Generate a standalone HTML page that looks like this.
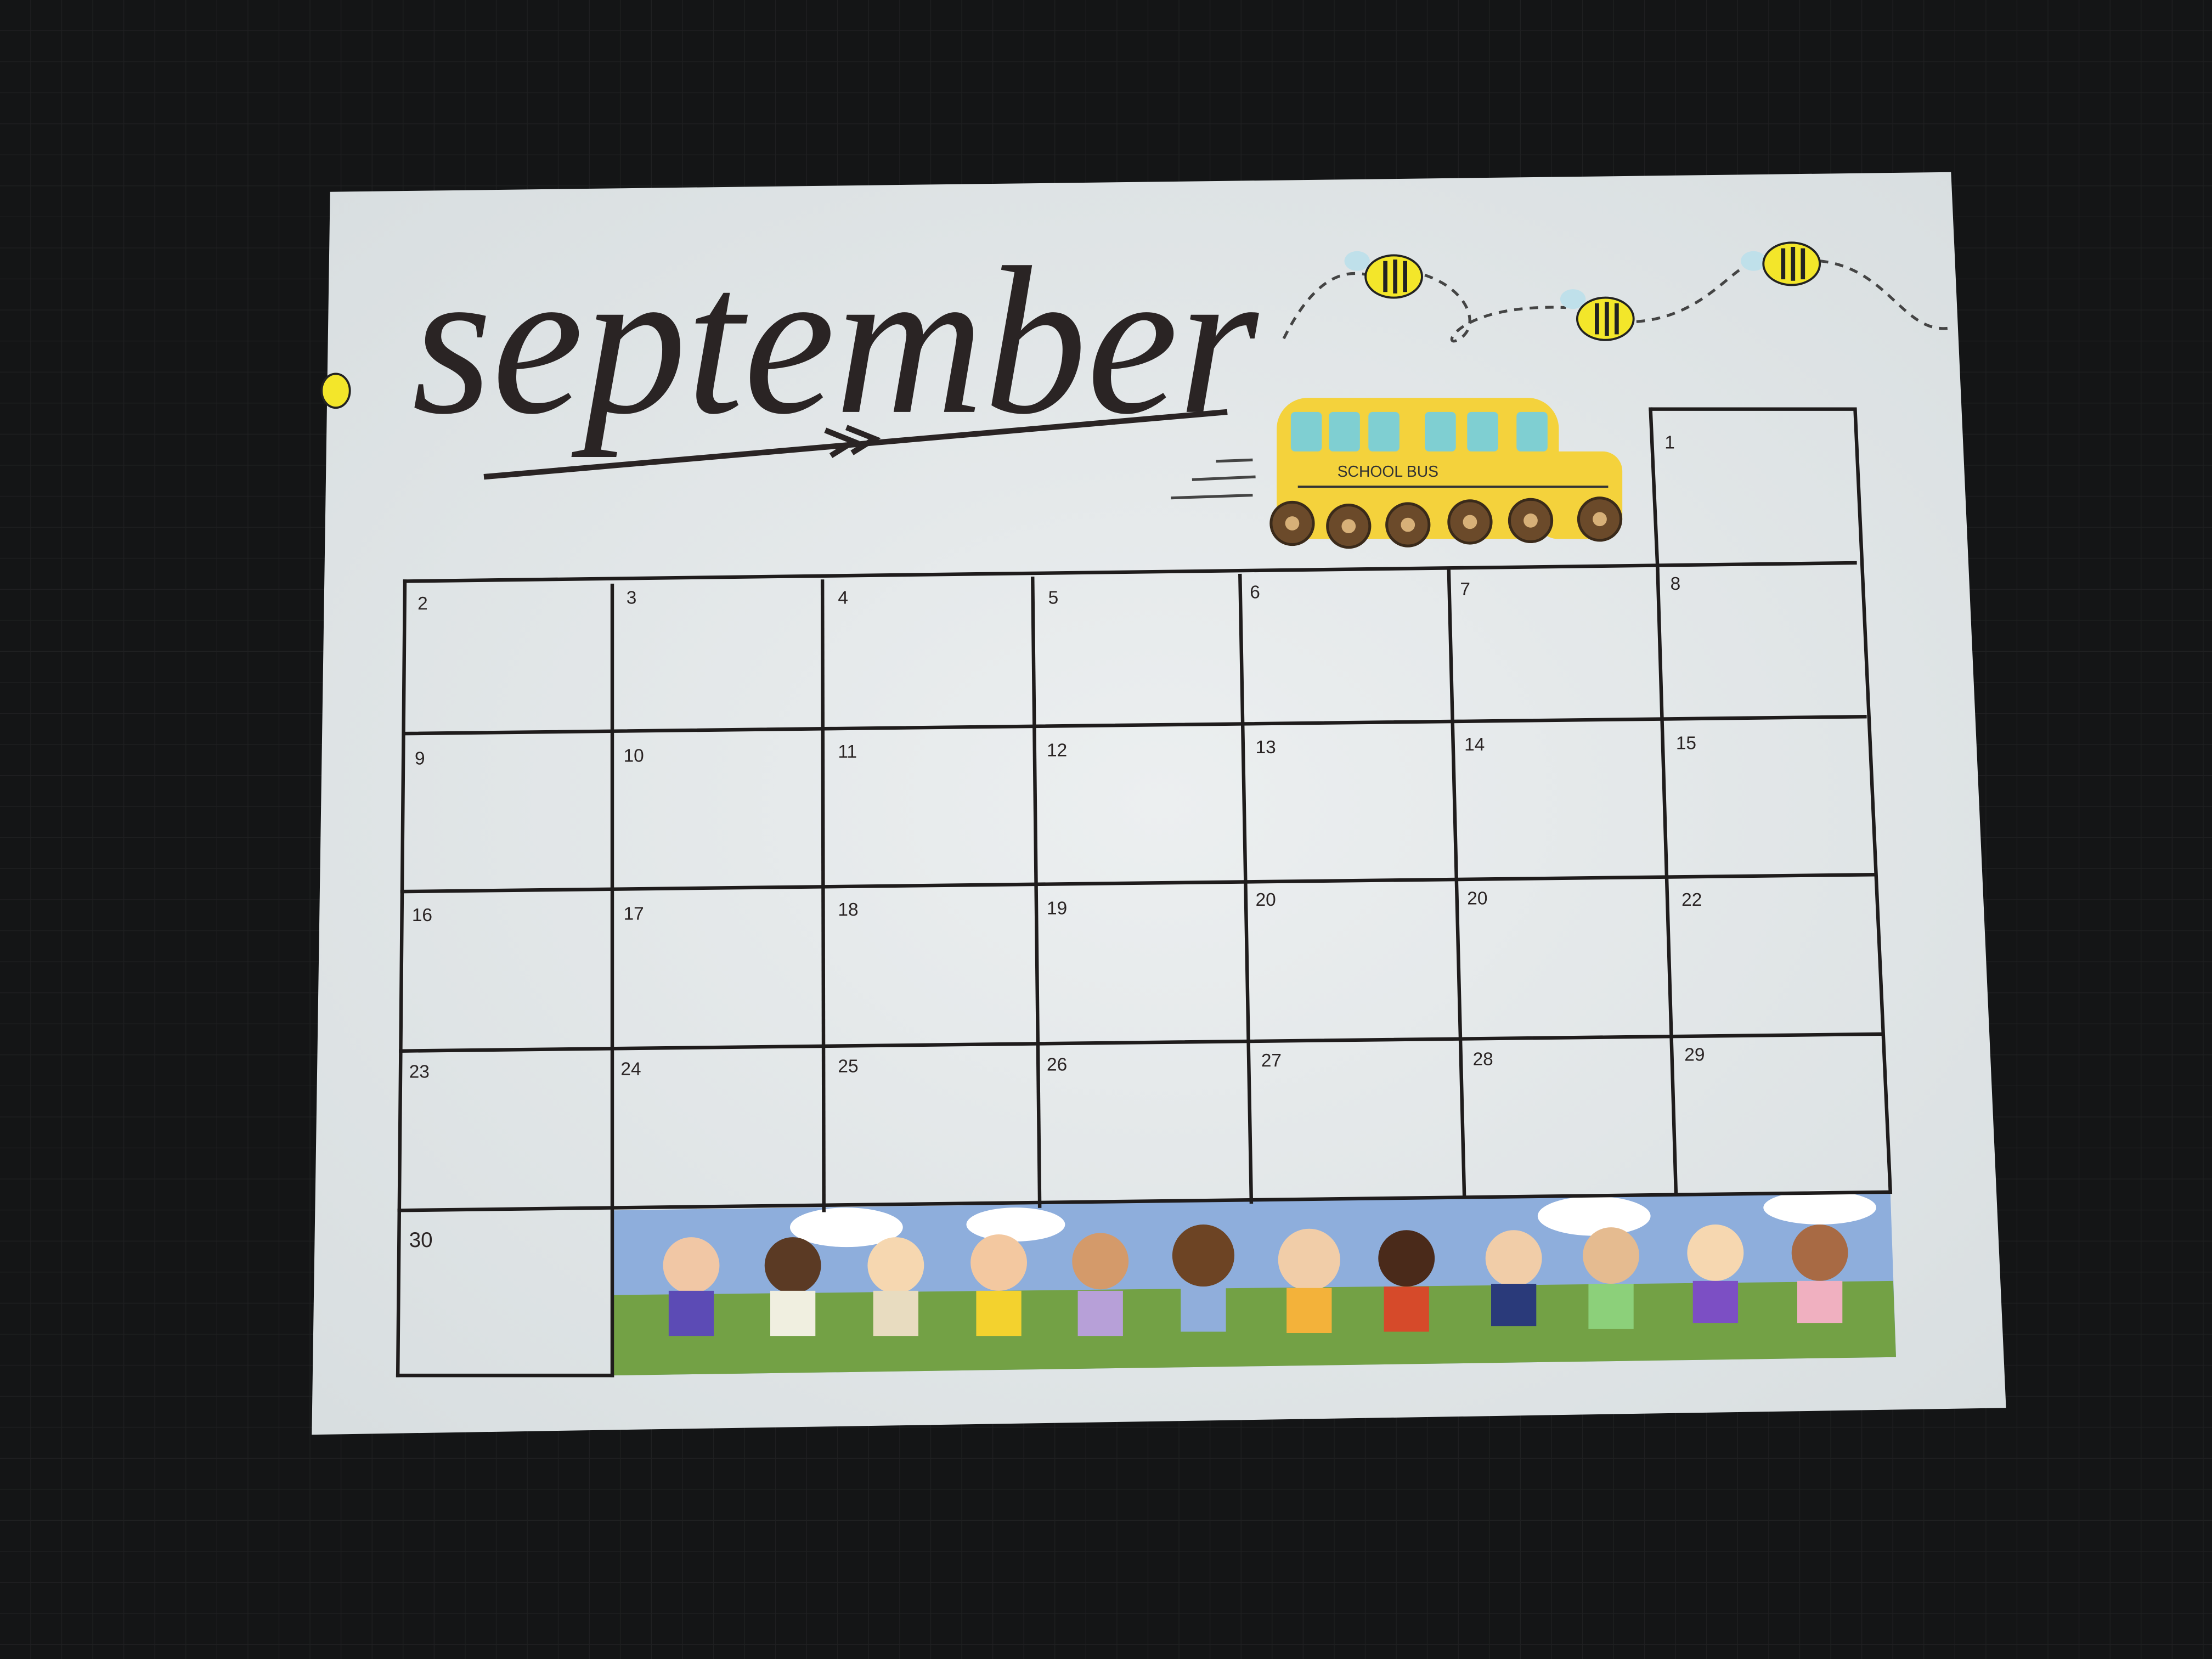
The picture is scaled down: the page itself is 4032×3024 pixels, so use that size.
<!DOCTYPE html>
<html><head><meta charset="utf-8"><style>
html,body{margin:0;padding:0;background:#151617;}
svg{display:block}
</style></head><body>
<svg width="4032" height="3024" viewBox="0 0 1568 1176" xmlns="http://www.w3.org/2000/svg">
<defs>
<radialGradient id="pg" cx="0.5" cy="0.5" r="0.7">
<stop offset="0" stop-color="#eceff0"/><stop offset="1" stop-color="#d8dee0"/>
</radialGradient>
<pattern id="grid" width="22" height="22" patternUnits="userSpaceOnUse">
<path d="M22 0V22H0" fill="none" stroke="#1f2021" stroke-width="1"/>
</pattern>
</defs>
<rect width="1568" height="1176" fill="#141516"/>
<rect width="1568" height="1176" fill="url(#grid)"/>
<polygon points="234,136 1383,122 1422,998 221,1017" fill="url(#pg)"/>
<text x="292" y="292" font-family="Liberation Serif, serif" font-style="italic" font-size="150" fill="#2a2424" textLength="600" lengthAdjust="spacingAndGlyphs">september</text>
<path d="M343 338 L870 292" stroke="#2a2424" stroke-width="4" fill="none"/>
<path d="M585 305 l20 8 -16 10 M600 303 l20 8 -16 10" stroke="#2a2424" stroke-width="4" fill="none"/>
<path d="M910 240 C930 200 950 190 970 195 M1010 195 C1040 205 1050 230 1035 240 C1020 250 1030 215 1110 218 M1160 228 C1200 225 1220 200 1235 190 M1290 185 C1340 190 1350 240 1385 232" stroke="#444" stroke-width="2" stroke-dasharray="6 5" fill="none"/>
<g fill="#bfe0ea"><ellipse cx="962" cy="185" rx="9" ry="7"/><ellipse cx="1115" cy="212" rx="9" ry="7"/><ellipse cx="1243" cy="185" rx="9" ry="7"/></g>
<g fill="#f3e62a" stroke="#222" stroke-width="1.5">
<ellipse cx="988" cy="196" rx="20" ry="15"/><ellipse cx="1138" cy="226" rx="20" ry="15"/><ellipse cx="1270" cy="187" rx="20" ry="15"/><ellipse cx="238" cy="277" rx="10" ry="12"/>
</g>
<g stroke="#222" stroke-width="3">
<path d="M982 185v22M989 184v24M996 185v22"/><path d="M1132 215v22M1139 214v24M1146 215v22"/><path d="M1264 176v22M1271 175v24M1278 176v22"/>
</g>
<rect x="905" y="282" width="200" height="100" rx="22" fill="#f4d23c"/>
<rect x="1090" y="320" width="60" height="62" rx="14" fill="#f4d23c"/>
<g fill="#7fcfd2"><rect x="915" y="292" width="22" height="28" rx="3"/><rect x="942" y="292" width="22" height="28" rx="3"/><rect x="970" y="292" width="22" height="28" rx="3"/><rect x="1010" y="292" width="22" height="28" rx="3"/><rect x="1040" y="292" width="22" height="28" rx="3"/><rect x="1075" y="292" width="22" height="28" rx="3"/></g>
<text x="948" y="338" font-family="Liberation Sans, sans-serif" font-size="11" fill="#333">SCHOOL BUS</text>
<path d="M920 345 L1140 345" stroke="#333" stroke-width="1.5"/>
<g fill="#6b4a2a" stroke="#3a2a1a" stroke-width="2"><circle cx="916" cy="371" r="15"/><circle cx="956" cy="373" r="15"/><circle cx="998" cy="372" r="15"/><circle cx="1042" cy="370" r="15"/><circle cx="1085" cy="369" r="15"/><circle cx="1134" cy="368" r="15"/></g>
<g fill="#d7b078"><circle cx="916" cy="371" r="5"/><circle cx="956" cy="373" r="5"/><circle cx="998" cy="372" r="5"/><circle cx="1042" cy="370" r="5"/><circle cx="1085" cy="369" r="5"/><circle cx="1134" cy="368" r="5"/></g>
<path d="M862 327 L888 326 M845 340 L890 338 M830 353 L888 351" stroke="#444" stroke-width="2"/>
<polygon points="434,858 1340,845 1344,962 434,975" fill="#8eaedc"/>
<polygon points="434,918 1342,908 1344,962 434,975" fill="#73a145"/>
<g fill="#fff"><ellipse cx="600" cy="870" rx="40" ry="14"/><ellipse cx="720" cy="868" rx="35" ry="12"/><ellipse cx="1130" cy="862" rx="40" ry="14"/><ellipse cx="1290" cy="856" rx="40" ry="12"/></g>
<g>
<circle cx="490" cy="897" r="20" fill="#f1c7a5"/><rect x="474" y="915" width="32" height="32" fill="#5c4bb5"/>
<circle cx="562" cy="897" r="20" fill="#5b3a24"/><rect x="546" y="915" width="32" height="32" fill="#f0efe0"/>
<circle cx="635" cy="897" r="20" fill="#f6d7b0"/><rect x="619" y="915" width="32" height="32" fill="#e8dcc0"/>
<circle cx="708" cy="895" r="20" fill="#f3c8a0"/><rect x="692" y="915" width="32" height="32" fill="#f3d22e"/>
<circle cx="780" cy="894" r="20" fill="#d49a6a"/><rect x="764" y="915" width="32" height="32" fill="#b7a0d8"/>
<circle cx="853" cy="890" r="22" fill="#6d4424"/><rect x="837" y="912" width="32" height="32" fill="#90aedb"/>
<circle cx="928" cy="893" r="22" fill="#f1cda8"/><rect x="912" y="913" width="32" height="32" fill="#f3b23a"/>
<circle cx="997" cy="892" r="20" fill="#4a2a1a"/><rect x="981" y="912" width="32" height="32" fill="#d64a2a"/>
<circle cx="1073" cy="892" r="20" fill="#f1cda8"/><rect x="1057" y="910" width="32" height="30" fill="#2a3a7a"/>
<circle cx="1142" cy="890" r="20" fill="#e5bb90"/><rect x="1126" y="910" width="32" height="32" fill="#8cd07a"/>
<circle cx="1216" cy="888" r="20" fill="#f6d7b0"/><rect x="1200" y="908" width="32" height="30" fill="#7c4fc4"/>
<circle cx="1290" cy="888" r="20" fill="#a86a44"/><rect x="1274" y="908" width="32" height="30" fill="#f0b0c0"/>
</g>
<g stroke="#1f1c1c" stroke-width="2.5" fill="none" stroke-linecap="square">
<path d="M1170 290 L1315 290 L1340 845"/>
<path d="M1170 290 L1175 403"/>
<path d="M287 412 L1315 399"/>
<path d="M287 520 L1322 508"/>
<path d="M285 632 L1328 620"/>
<path d="M284 745 L1333 733"/>
<path d="M283 858 L1340 845"/>
<path d="M282 975 L434 975"/>
<path d="M287 412 L282 975"/>
<path d="M434 415 L434 975"/>
<path d="M583 412 L584 858"/>
<path d="M732 410 L737 855"/>
<path d="M879 408 L887 852"/>
<path d="M1027 405 L1038 848"/>
<path d="M1175 403 L1188 845"/>
</g>
<g font-family="Liberation Sans, sans-serif" font-size="13" fill="#2a2424">
<text x="1180" y="318">1</text>
<text x="296" y="432">2</text><text x="444" y="428">3</text><text x="594" y="428">4</text><text x="743" y="428">5</text><text x="886" y="424">6</text><text x="1035" y="422">7</text><text x="1184" y="418">8</text>
<text x="294" y="542">9</text><text x="442" y="540">10</text><text x="594" y="537">11</text><text x="742" y="536">12</text><text x="890" y="534">13</text><text x="1038" y="532">14</text><text x="1188" y="531">15</text>
<text x="292" y="653">16</text><text x="442" y="652">17</text><text x="594" y="649">18</text><text x="742" y="648">19</text><text x="890" y="642">20</text><text x="1040" y="641">20</text><text x="1192" y="642">22</text>
<text x="290" y="764">23</text><text x="440" y="762">24</text><text x="594" y="760">25</text><text x="742" y="759">26</text><text x="894" y="756">27</text><text x="1044" y="755">28</text><text x="1194" y="752">29</text>
<text x="290" y="884" font-size="15">30</text>
</g>
</svg>
</body></html>
